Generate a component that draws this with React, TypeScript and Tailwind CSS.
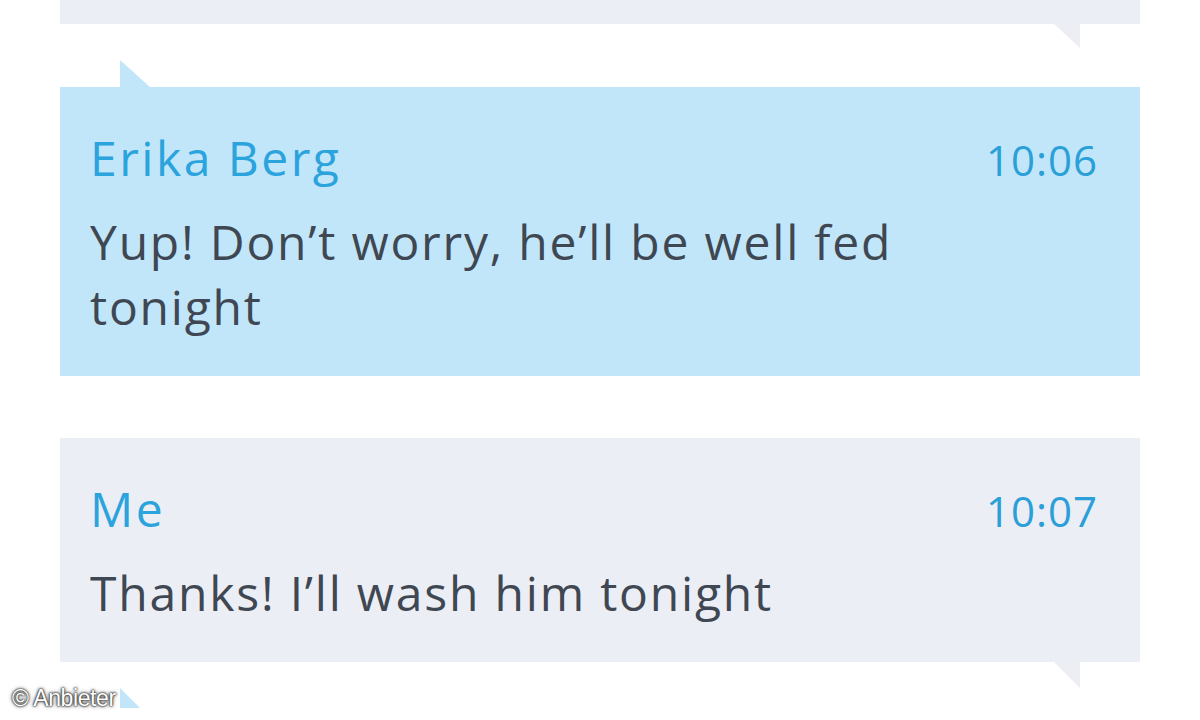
import React from 'react';

type Msg = { name: string; time: string; lines: string[]; blue: boolean };

const messages: Msg[] = [
    { name: 'Erika Berg', time: '10:06', lines: ['Yup! Don’t worry, he’ll be well fed', 'tonight'], blue: true },
    { name: 'Me', time: '10:07', lines: ['Thanks! I’ll wash him tonight'], blue: false },
];

function Bubble({ msg }: { msg: Msg }) {
    return (
        <div className={`${msg.blue ? 'bg-[#c1e6f9]' : 'bg-[#eceef5]'} pl-[30px] pr-[42px] pt-[38px] pb-[37px]`}>
            <div className="flex items-baseline justify-between">
                <span className="text-[48px] leading-[65px] tracking-[2.5px] text-[#2ba3dd]">{msg.name}</span>
                <span className="text-[42px] leading-[65px] tracking-[1px] text-[#2a9fd8]">{msg.time}</span>
            </div>
            <div className="mt-[17px] text-[48px] leading-[65px] tracking-[1.8px] text-[#3f4752]">
                {msg.lines.map((l) => (
                    <div key={l}>{l}</div>
                ))}
            </div>
        </div>
    );
}

export default function App() {
    return (
        <div
            className="relative h-[720px] w-[1200px] overflow-hidden bg-white px-[60px]"
            style={{ fontFamily: '"Open Sans", "Noto Sans", sans-serif' }}
        >
            {/* Ende der vorigen Nachricht */}
            <div className="h-[24px] bg-[#eceef5]" />
            <div className="flex h-[36px] justify-end pr-[60px]">
                <svg width="26" height="24" viewBox="0 0 26 24">
                    <polygon points="0,0 26,0 26,24" fill="#eceef3" />
                </svg>
            </div>

            <div className="flex h-[27px] items-end pl-[60px]">
                <svg width="30" height="27" viewBox="0 0 30 27">
                    <polygon points="0,0 0,27 30,27" fill="#c1e6f9" />
                </svg>
            </div>
            <Bubble msg={messages[0]} />

            <div className="h-[62px]" />
            <Bubble msg={messages[1]} />
            <div className="flex h-[26px] justify-end pr-[60px]">
                <svg width="26" height="26" viewBox="0 0 26 26">
                    <polygon points="0,0 26,0 26,26" fill="#eceef3" />
                </svg>
            </div>
            <div className="flex h-[20px] items-end pl-[60px]">
                <svg width="30" height="20" viewBox="0 0 30 20">
                    <polygon points="0,0 0,20 20,20" fill="#c1e6f9" />
                </svg>
            </div>

            <div
                className="absolute bottom-[8px] left-[12px] text-[23px] leading-[27px] tracking-[-0.4px] text-white [text-shadow:0_0_2px_#222,0_0_2px_#222,0_0_4px_#444]"
                style={{ fontFamily: '"Liberation Sans", sans-serif' }}
            >
                © Anbieter
            </div>
        </div>
    );
}
